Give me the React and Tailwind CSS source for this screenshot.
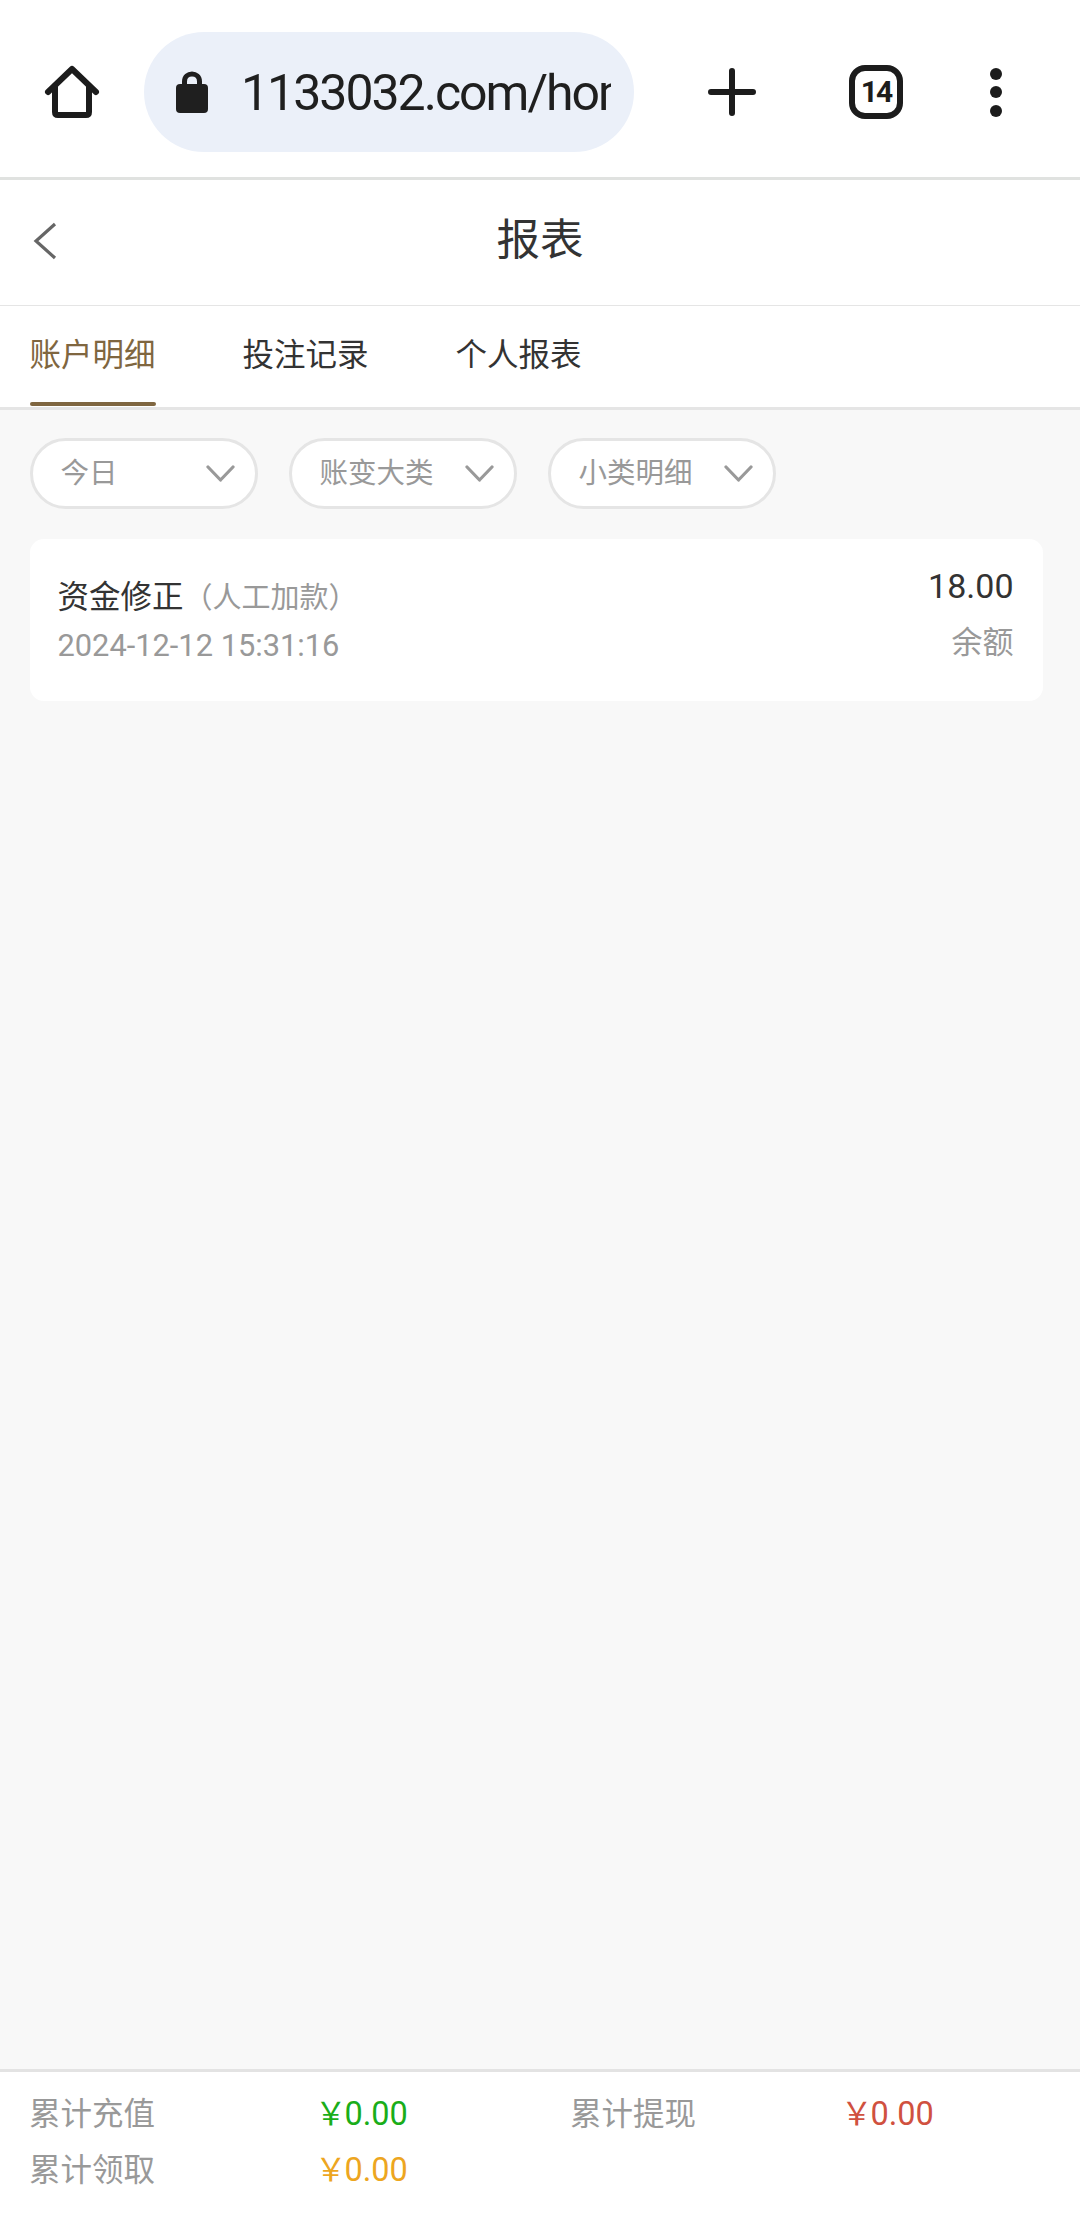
import React from 'react';

const FILTERS = ['今日', '账变大类', '小类明细'];
const TABS = ['账户明细', '投注记录', '个人报表'];

function Chevron() {
  return (
    <svg width="29" height="17" viewBox="0 0 29 17" fill="none" stroke="#999999" strokeWidth="3.2" strokeLinecap="round" strokeLinejoin="round">
      <path d="M2 2 L14.5 15 L27 2" />
    </svg>
  );
}

function BrowserBar() {
  return (
    <div className="h-[177px] pt-[7px] bg-white flex items-center">
      <div className="w-[144px] flex justify-center">
        <svg width="56" height="54" viewBox="0 0 56 54" fill="none" stroke="#1c1c1c" strokeWidth="6" strokeLinejoin="round" strokeLinecap="round">
          <path d="M4 27 L28 4 L52 27 M11 22 V47 Q11 50 14 50 H42 Q45 50 45 47 V22" />
        </svg>
      </div>
      <div className="w-[490px] h-[120px] rounded-[60px] bg-[#ebf0f9] flex items-center pl-[32px] overflow-hidden">
        <svg width="32" height="42" viewBox="0 0 32 42" className="shrink-0">
          <path d="M8.5 15 V10.5 C8.5 0.5 23.5 0.5 23.5 10.5 V15" fill="none" stroke="#1f1f1f" strokeWidth="5" />
          <rect x="0" y="13" width="32" height="29" rx="4" fill="#1f1f1f" />
        </svg>
        <div className="ml-[33px] mt-[3px] w-[370px] overflow-hidden whitespace-nowrap text-[50px] tracking-[-2px] text-[#1f1f1f]">1133032.com/home</div>
      </div>
      <div className="ml-[74px] w-[48px] flex justify-center">
        <svg width="48" height="48" viewBox="0 0 48 48" stroke="#1c1c1c" strokeWidth="6" strokeLinecap="round">
          <path d="M24 3 V45 M3 24 H45" />
        </svg>
      </div>
      <div className="ml-[93px] w-[54px] h-[54px] rounded-[16px] border-[6px] border-[#1c1c1c] flex items-center justify-center text-[30px] font-bold tracking-[-2px] text-[#1c1c1c] leading-none">14</div>
      <div className="ml-[87px] flex flex-col gap-[6.5px]">
        <div className="w-[12px] h-[12px] rounded-full bg-[#1c1c1c]" />
        <div className="w-[12px] h-[12px] rounded-full bg-[#1c1c1c]" />
        <div className="w-[12px] h-[12px] rounded-full bg-[#1c1c1c]" />
      </div>
    </div>
  );
}

export default function App() {
  return (
    <div className="w-[1080px] h-[2216px] flex flex-col bg-[#f8f8f8] font-['Roboto','Noto_Sans_CJK_SC',sans-serif] overflow-hidden">
      <BrowserBar />
      <div className="h-[3px] bg-[#e0e2e0]" />
      <div className="h-[125px] pb-[3px] bg-white flex items-center">
        <svg width="24" height="38" viewBox="0 0 24 38" fill="none" stroke="#666666" strokeWidth="3.2" className="ml-[33px]">
          <path d="M22 2 L3 19 L22 36" />
        </svg>
        <div className="flex-1 text-center pr-[57px] text-[43.5px] text-[#333333]">报表</div>
      </div>
      <div className="h-[1px] bg-[#e5e5e5]" />
      <div className="h-[101px] bg-white flex pl-[29.5px] gap-[87px]">
        {TABS.map((tab, i) => (
          <div key={tab} className={`w-[126px] flex flex-col items-center text-[31.5px] ${i === 0 ? 'text-[#7f6640]' : 'text-[#333333]'}`}>
            <div className="flex-1 flex items-center pt-[4px]">{tab}</div>
            <div className={`w-full h-[4px] rounded-[2px] mb-[1px] ${i === 0 ? 'bg-[#7f6640]' : 'bg-transparent'}`} />
          </div>
        ))}
      </div>
      <div className="h-[3px] bg-[#e5e5e5]" />
      <div className="flex-1 px-[29.5px] pt-[28px]">
        <div className="flex gap-[31px]">
          {FILTERS.map(f => (
            <div key={f} className="w-[228px] h-[71px] rounded-[36px] bg-white border-[3px] border-[#e5e5e5] flex items-center justify-between pl-[28px] pr-[20px] text-[28.5px] text-[#999999]">
              <span className="pt-[2px]">{f}</span>
              <Chevron />
            </div>
          ))}
        </div>
        <div className="mt-[30px] w-[1013px] h-[162px] rounded-[14px] bg-white flex justify-between items-center pl-[28px] pr-[29px]">
          <div className="pt-[2px]">
            <div className="text-[31.5px] text-[#333333] leading-[44px]">资金修正<span className="text-[#999999] text-[29px]">（人工加款）</span></div>
            <div className="mt-[6px] text-[30.8px] text-[#999999] leading-[40px]">2024-12-12 15:31:16</div>
          </div>
          <div className="text-right">
            <div className="text-[34px] text-[#333333] leading-[44px] -mt-[11px]">18.00</div>
            <div className="mt-[13px] text-[31px] text-[#999999] leading-[44px]">余额</div>
          </div>
        </div>
      </div>
      <div className="h-[3px] bg-[#e3e3e3]" />
      <div className="h-[144px] bg-white pl-[29px] pt-[15px] grid grid-cols-[286px_255px_271px_1fr] auto-rows-[55.5px] text-[31.5px] items-center">
        <div className="text-[#999999]">累计充值</div>
        <div className="text-[#1aad19]">￥<span className="text-[32.5px] -ml-[2px]">0.00</span></div>
        <div className="text-[#999999]">累计提现</div>
        <div className="text-[#d0513f]">￥<span className="text-[32.5px] -ml-[2px]">0.00</span></div>
        <div className="text-[#999999]">累计领取</div>
        <div className="text-[#eda61f]">￥<span className="text-[32.5px] -ml-[2px]">0.00</span></div>
      </div>
    </div>
  );
}
